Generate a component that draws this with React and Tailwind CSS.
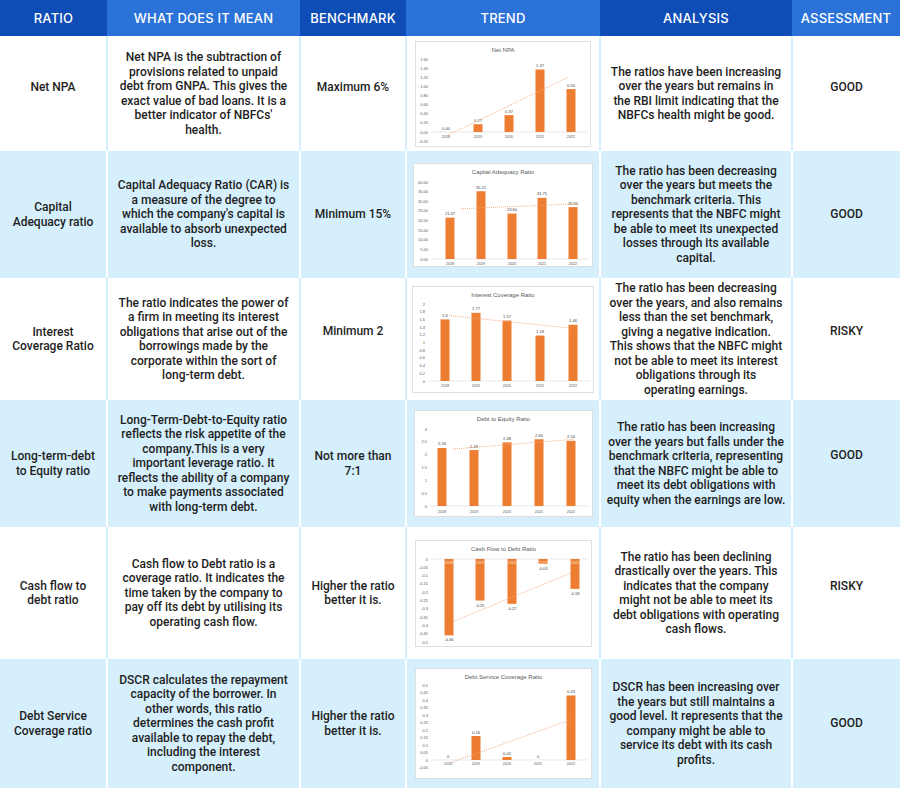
import React from "react";

const ORANGE = "#ed7d31";

function Chart({ c }) {
  const { w, h, title, ticks, m, xs, vals, labels, years, xLabelY, trend, neg, tickX } = c;
  const y = (v) => m.y0 + (v - m.v0) * ((m.y1 - m.y0) / (m.v1 - m.v0));
  const zero = y(0);
  const plotL = tickX + 3;
  return (
    <svg width={w} height={h} viewBox={`0 0 ${w} ${h}`} className="block">
      <rect x="0.5" y="0.5" width={w - 1} height={h - 1} fill="#fff" stroke="#d9d9d9" strokeWidth="0.8" />
      <text x={w / 2} y="10.5" textAnchor="middle" fontSize="6" fill="#595959" fontFamily="Liberation Sans, Arial, sans-serif">
        {title}
      </text>
      {ticks.map((t) => (
        <text key={t.l} x={tickX} y={y(t.v) + 1.5} textAnchor="end" fontSize="4" fill="#595959" fontFamily="Liberation Sans, Arial, sans-serif">
          {t.l}
        </text>
      ))}
      <line x1={plotL} x2={w - 4} y1={zero} y2={zero} stroke="#d9d9d9" strokeWidth="0.6" />
      {xs.map((x, i) => {
        const v = vals[i];
        const top = Math.min(y(v), zero);
        const bh = Math.abs(y(v) - zero);
        return (
          <g key={i}>
            <rect x={x - 4.5} y={top} width="9" height={bh} fill={ORANGE} />
            {neg ? (
              <>
                <text x={x} y={y(v) + 6} textAnchor="middle" fontSize="4" fill="#404040" fontFamily="Liberation Sans, Arial, sans-serif">
                  {labels[i]}
                </text>
                <text x={x} y={zero + 5} textAnchor="middle" fontSize="3.8" fill="#fbe5d6" fontFamily="Liberation Sans, Arial, sans-serif">
                  {years[i]}
                </text>
              </>
            ) : (
              <>
                <text x={x} y={top - 2.5} textAnchor="middle" fontSize="4" fill="#404040" fontFamily="Liberation Sans, Arial, sans-serif">
                  {labels[i]}
                </text>
                <text x={x} y={xLabelY} textAnchor="middle" fontSize="3.8" fill="#595959" fontFamily="Liberation Sans, Arial, sans-serif">
                  {years[i]}
                </text>
              </>
            )}
          </g>
        );
      })}
      <line
        x1={trend[0][0]}
        y1={y(trend[0][1])}
        x2={trend[1][0]}
        y2={y(trend[1][1])}
        stroke="#f4a878"
        strokeWidth="0.9"
        strokeDasharray="1 1"
      />
    </svg>
  );
}

const YEARS = ["2018", "2019", "2020", "2021", "2022"];

const mk = (arr) => arr.map(([v, l]) => ({ v, l }));

const charts = [
  {
    w: 176, h: 106, title: "Net NPA", tickX: 13,
    ticks: mk([[1.6, "1.60"], [1.4, "1.40"], [1.2, "1.20"], [1.0, "1.00"], [0.8, "0.80"], [0.6, "0.60"], [0.4, "0.40"], [0.2, "0.20"], [0, "0.00"], [-0.2, "-0.20"]]),
    m: { v0: 0, y0: 91, v1: 1.6, y1: 18 },
    xs: [31, 63, 94, 125, 156], vals: [0, 0.17, 0.37, 1.37, 0.94],
    labels: ["0.00", "0.17", "0.37", "1.37", "0.94"], years: YEARS, xLabelY: 97,
    trend: [[33, -0.07], [154, 1.21]],
  },
  {
    w: 180, h: 104, title: "Capital Adequacy Ratio", tickX: 15,
    ticks: mk([[40, "40.00"], [35, "35.00"], [30, "30.00"], [25, "25.00"], [20, "20.00"], [15, "15.00"], [10, "10.00"], [5, "5.00"], [0, "0.00"]]),
    m: { v0: 0, y0: 96, v1: 40, y1: 19 },
    xs: [37, 68, 99, 129, 160], vals: [21.47, 35.21, 23.6, 31.75, 26.94],
    labels: ["21.47", "35.21", "23.60", "31.75", "26.94"], years: YEARS, xLabelY: 102,
    trend: [[48, 26.1], [165, 28.7]],
  },
  {
    w: 182, h: 107, title: "Interest Coverage Ratio", tickX: 13,
    ticks: mk([[2, "2"], [1.8, "1.8"], [1.6, "1.6"], [1.4, "1.4"], [1.2, "1.2"], [1, "1"], [0.8, "0.8"], [0.6, "0.6"], [0.4, "0.4"], [0.2, "0.2"], [0, "0"]]),
    m: { v0: 0, y0: 95, v1: 2, y1: 18 },
    xs: [33, 64, 95, 128, 161], vals: [1.6, 1.77, 1.57, 1.18, 1.46],
    labels: ["1.6", "1.77", "1.57", "1.18", "1.46"], years: YEARS, xLabelY: 101,
    trend: [[37, 1.7], [160, 1.37]],
  },
  {
    w: 179, h: 107, title: "Debt to Equity Ratio", tickX: 13,
    ticks: mk([[3, "3"], [2.5, "2.5"], [2, "2"], [1.5, "1.5"], [1, "1"], [0.5, "0.5"], [0, "0"]]),
    m: { v0: 0, y0: 96, v1: 3, y1: 19 },
    xs: [28, 60, 93, 125, 157], vals: [2.26, 2.18, 2.48, 2.6, 2.54],
    labels: ["2.26", "2.18", "2.48", "2.60", "2.54"], years: YEARS, xLabelY: 103,
    trend: [[39, 2.22], [160, 2.6]],
  },
  {
    w: 177, h: 107, title: "Cash Flow to Debt Ratio", tickX: 13, neg: true,
    ticks: mk([[0, "0"], [-0.05, "-0.05"], [-0.1, "-0.1"], [-0.15, "-0.15"], [-0.2, "-0.2"], [-0.25, "-0.25"], [-0.3, "-0.3"], [-0.35, "-0.35"], [-0.4, "-0.4"], [-0.45, "-0.45"], [-0.5, "-0.5"]]),
    m: { v0: 0, y0: 19, v1: -0.5, y1: 102 },
    xs: [34, 65, 97, 128, 160], vals: [-0.46, -0.25, -0.27, -0.03, -0.18],
    labels: ["-0.46", "-0.25", "-0.27", "-0.03", "-0.18"], years: YEARS, xLabelY: 24,
    trend: [[38, -0.378], [155, -0.086]],
  },
  {
    w: 177, h: 111, title: "Debt Service Coverage Ratio", tickX: 13,
    ticks: mk([[0.5, "0.5"], [0.45, "0.45"], [0.4, "0.4"], [0.35, "0.35"], [0.3, "0.3"], [0.25, "0.25"], [0.2, "0.2"], [0.15, "0.15"], [0.1, "0.1"], [0.05, "0.05"], [0, "0"], [-0.05, "-0.05"]]),
    m: { v0: 0, y0: 92, v1: 0.5, y1: 17 },
    xs: [33, 61, 92, 123, 156], vals: [0, 0.16, 0.02, 0, 0.43],
    labels: ["0", "0.16", "0.02", "0", "0.43"], years: YEARS, xLabelY: 97,
    trend: [[37, -0.015], [156, 0.269]],
  },
];

const rows = [
  {
    h: "h-[115px]", blue: false, rl: "pb-3", bl: "pb-3", al: "pb-3",
    ratio: ["Net NPA"],
    mean: ["Net NPA is the subtraction of", "provisions related to unpaid", "debt from GNPA. This gives the", "exact value of bad loans. It is a", "better indicator of NBFCs'", "health."],
    bench: ["Maximum 6%"],
    analysis: ["The ratios have been increasing", "over the years but remains in", "the RBI limit indicating that the", "NBFCs health might be good."],
    assess: "GOOD",
  },
  {
    h: "h-[127px]", blue: true, rl: "", bl: "", al: "",
    ratio: ["Capital", "Adequacy ratio"],
    mean: ["Capital Adequacy Ratio (CAR) is", "a measure of the degree to", "which the company's capital is", "available to absorb unexpected", "loss."],
    bench: ["Minimum 15%"],
    analysis: ["The ratio has been decreasing", "over the years but meets the", "benchmark criteria. This", "represents that the NBFC might", "be able to meet its unexpected", "losses through its available", "capital."],
    assess: "GOOD",
  },
  {
    h: "h-[122px]", blue: false, rl: "", bl: "pb-4", al: "pb-4",
    ratio: ["Interest", "Coverage Ratio"],
    mean: ["The ratio indicates the power of", "a firm in meeting its interest", "obligations that arise out of the", "borrowings made by the", "corporate within the sort of", "long-term debt."],
    bench: ["Minimum 2"],
    analysis: ["The ratio has been decreasing", "over the years, and also remains", "less than the set benchmark,", "giving a negative indication.", "This shows that the NBFC might", "not be able to meet its interest", "obligations through its", "operating earnings."],
    assess: "RISKY",
  },
  {
    h: "h-[127px]", blue: true, rl: "", bl: "", al: "pb-4",
    ratio: ["Long-term-debt", "to Equity ratio"],
    mean: ["Long-Term-Debt-to-Equity ratio", "reflects the risk appetite of the", "company.This is a very", "important leverage ratio. It", "reflects the ability of a company", "to make payments associated", "with long-term debt."],
    bench: ["Not more than", "7:1"],
    analysis: ["The ratio has been increasing", "over the years but falls under the", "benchmark criteria, representing", "that the NBFC might be able to", "meet its debt obligations with", "equity when the earnings are low."],
    assess: "GOOD",
  },
  {
    h: "h-[132px]", blue: false, rl: "", bl: "", al: "pb-[14px]",
    ratio: ["Cash flow to", "debt ratio"],
    mean: ["Cash flow to Debt ratio is a", "coverage ratio. It indicates the", "time taken by the company to", "pay off its debt by utilising its", "operating cash flow."],
    bench: ["Higher the ratio", "better it is."],
    analysis: ["The ratio has been declining", "drastically over the years. This", "indicates that the company", "might not be able to meet its", "debt obligations with operating", "cash flows."],
    assess: "RISKY",
  },
  {
    h: "h-[129px]", blue: true, rl: "", bl: "", al: "",
    ratio: ["Debt Service", "Coverage ratio"],
    mean: ["DSCR calculates the repayment", "capacity of the borrower. In", "other words, this ratio", "determines the cash profit", "available to repay the debt,", "including the interest", "component."],
    bench: ["Higher the ratio", "better it is."],
    analysis: ["DSCR has been increasing over", "the years but still maintains a", "good level. It represents that the", "company might be able to", "service its debt with its cash", "profits."],
    assess: "GOOD",
  },
];

function Lines({ lines }) {
  return (
    <div>
      {lines.map((l, i) => (
        <div key={i} className="whitespace-nowrap">{l}</div>
      ))}
    </div>
  );
}

function Row({ r, chart }) {
  const cell = r.blue ? "bg-[#d5effc]" : "bg-white";
  const wrap = r.blue ? "bg-white" : "bg-[#d5effc]";
  return (
    <div className={`grid grid-cols-[106px_191px_104px_192px_190px_107px] gap-x-[2px] ${wrap} ${r.h}`}>
      <div className={`${cell} flex items-center justify-center text-center ${r.rl}`}>
        <Lines lines={r.ratio} />
      </div>
      <div className={`${cell} flex items-center justify-center text-center`}>
        <Lines lines={r.mean} />
      </div>
      <div className={`${cell} flex items-center justify-center text-center ${r.bl}`}>
        <Lines lines={r.bench} />
      </div>
      <div className={`${cell} flex items-center justify-center`}>
        <Chart c={chart} />
      </div>
      <div className={`${cell} flex items-center justify-center text-center`}>
        <Lines lines={r.analysis} />
      </div>
      <div className={`${cell} flex items-center justify-center text-center ${r.al}`}>
        <Lines lines={[r.assess]} />
      </div>
    </div>
  );
}

export default function App() {
  const heads = [
    ["RATIO", "bg-[#0e4db5]"],
    ["WHAT DOES IT MEAN", "bg-[#2b72d8]"],
    ["BENCHMARK", "bg-[#0e4db5]"],
    ["TREND", "bg-[#2b72d8]"],
    ["ANALYSIS", "bg-[#0e4db5]"],
    ["ASSESSMENT", "bg-[#2b72d8]"],
  ];
  return (
    <div className="w-[900px] h-[788px] overflow-hidden bg-white font-['Roboto',_'Liberation_Sans',_sans-serif] text-[12px] leading-[14.5px] font-medium text-[#1e1e1e]">
      <div className="grid grid-cols-[107px_193px_106px_194px_192px_108px] h-[36px]">
        {heads.map(([t, bg]) => (
          <div key={t} className={`${bg} flex items-center justify-center text-white font-['Inter',_sans-serif] text-[13px] font-medium tracking-[0.2px]`}>
            {t}
          </div>
        ))}
      </div>
      {rows.map((r, i) => (
        <Row key={i} r={r} chart={charts[i]} />
      ))}
    </div>
  );
}
